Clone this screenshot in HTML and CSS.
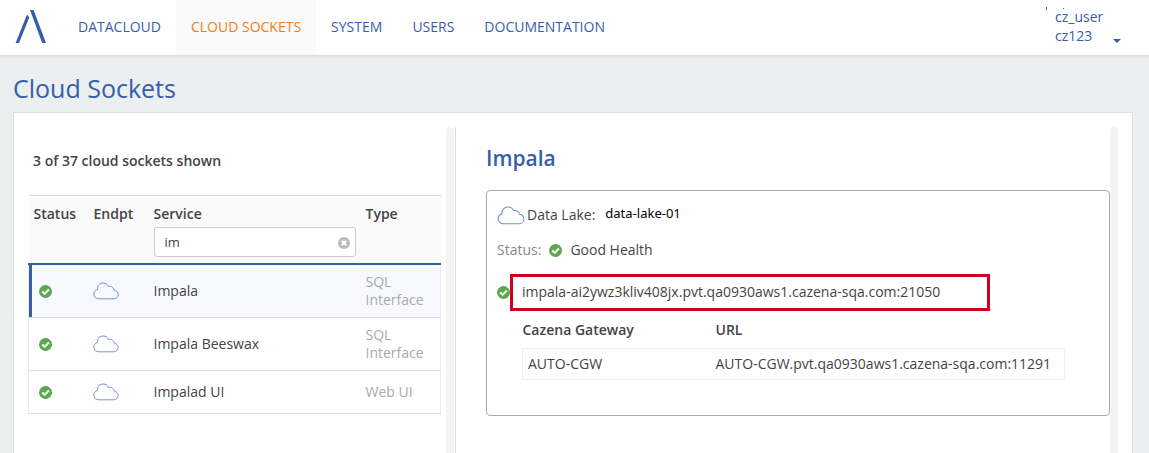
FILE: index.html
```html
<!DOCTYPE html>
<html lang="en">
<head>
<meta charset="utf-8">
<meta name="viewport" content="width=device-width, initial-scale=1">
<title>Cloud Sockets</title>
<link rel="stylesheet" href="styles.css">
</head>
<body>
<svg class="sprite" aria-hidden="true">
  <symbol id="cloud" viewBox="0 0 26 18">
    <path d="M5.8 16.8C2.900 16.800 .8 14.800 .8 12.100C.8 9.800 2.200 8 4.500 7.300C4.200 3.500 6.800 1 10.200 1C12.700 1 14.600 2.400 15.400 4.500C17.800 3.600 20.600 5.100 20.900 7.900C23.500 8.300 25.200 10.200 25.200 12.500C25.200 15 23.300 16.800 20.800 16.800Z" fill="none" stroke="currentColor" stroke-linejoin="round"/>
  </symbol>
  <symbol id="check" viewBox="0 0 12 12">
    <circle cx="6" cy="6" r="6" fill="currentColor"/>
    <path d="M3 6.100L5.200 8.200L9.100 4.200" fill="none" stroke="#fff" stroke-width="1.900"/>
  </symbol>
</svg>

<header class="topbar">
  <a class="logo" href="#" aria-label="Home">
    <svg width="32" height="34" viewBox="0 0 32 34" aria-hidden="true">
      <path d="M12 4.500L14.300 7.500L4 33H.6Z M15 0H18.600L31 33H27.200Z" fill="#375eab"/>
    </svg>
  </a>
  <nav class="nav">
    <a class="nav-link" href="#">DATACLOUD</a>
    <a class="nav-link nav-link-active" href="#" aria-current="page">CLOUD SOCKETS</a>
    <a class="nav-link" href="#">SYSTEM</a>
    <a class="nav-link" href="#">USERS</a>
    <a class="nav-link" href="#">DOCUMENTATION</a>
  </nav>
  <button class="account" type="button">
    <svg class="account-marks" width="20" height="3" viewBox="0 0 20 3" aria-hidden="true">
      <path d="M1 0H2V3H1ZM18 1H19V2H18Z" fill="#375eab"/>
    </svg>
    <span class="account-name">cz_user<br>cz123</span>
    <span class="caret"></span>
  </button>
</header>

<main class="page">
  <h1 class="page-title">Cloud Sockets</h1>
  <div class="panel">
    <section class="list-pane">
      <div class="list-body">
        <p class="count">3 of 37 cloud sockets shown</p>
        <table class="sockets">
          <thead>
            <tr>
              <th class="col-icon" scope="col">Status</th>
              <th class="col-icon" scope="col">Endpt</th>
              <th scope="col">
                <label for="service-filter">Service</label>
                <span class="filter">
                  <input id="service-filter" type="text" value="im">
                  <button class="clear" type="button" aria-label="Clear filter">
                    <svg width="12" height="12" viewBox="0 0 12 12" aria-hidden="true">
                      <circle cx="6" cy="6" r="6" fill="#bbb"/>
                      <path d="M3.700 3.700L8.300 8.300M8.300 3.700L3.700 8.300" stroke="#fff" stroke-width="2"/>
                    </svg>
                  </button>
                </span>
              </th>
              <th class="col-type" scope="col">Type</th>
            </tr>
          </thead>
          <tbody>
            <tr class="selected">
              <td class="status"><svg class="check"><use href="#check"/></svg></td>
              <td class="endpt"><svg class="cloud"><use href="#cloud"/></svg></td>
              <td>Impala</td>
              <td class="type">SQL Interface</td>
            </tr>
            <tr>
              <td class="status"><svg class="check"><use href="#check"/></svg></td>
              <td class="endpt"><svg class="cloud"><use href="#cloud"/></svg></td>
              <td>Impala Beeswax</td>
              <td class="type">SQL Interface</td>
            </tr>
            <tr>
              <td class="status"><svg class="check"><use href="#check"/></svg></td>
              <td class="endpt"><svg class="cloud"><use href="#cloud"/></svg></td>
              <td>Impalad UI</td>
              <td class="type">Web UI</td>
            </tr>
          </tbody>
        </table>
      </div>
      <div class="track"></div>
    </section>

    <section class="detail-pane">
      <div class="detail-body">
        <h2 class="detail-title">Impala</h2>
        <div class="detail-box">
          <div class="lake">
            <svg class="cloud cloud-large"><use href="#cloud"/></svg>
            <span>Data Lake:</span>
            <span class="lake-name">data-lake-01</span>
          </div>
          <div class="health">
            <span class="muted">Status:</span>
            <svg class="check"><use href="#check"/></svg>
            <span>Good Health</span>
          </div>
          <div class="endpoint">
            <svg class="check"><use href="#check"/></svg>
            <span class="address">impala-ai2ywz3kliv408jx.pvt.qa0930aws1.cazena-sqa.com:21050</span>
          </div>
          <table class="gateways">
            <thead>
              <tr><th class="col-gateway" scope="col">Cazena Gateway</th><th scope="col">URL</th></tr>
            </thead>
            <tbody>
              <tr><td>AUTO-CGW</td><td>AUTO-CGW.pvt.qa0930aws1.cazena-sqa.com:11291</td></tr>
            </tbody>
          </table>
        </div>
      </div>
      <div class="track"></div>
    </section>
  </div>
</main>
</body>
</html>
```
FILE: styles.css
```css
* {
  box-sizing: border-box;
}

body {
  margin: 0;
  min-height: 100vh;
  display: flex;
  flex-direction: column;
  background: #ebeff0;
  color: #444;
  font: 14px/18px "Open Sans", "Noto Sans", sans-serif;
}

button,
input {
  font: inherit;
  color: inherit;
}

svg {
  display: block;
  flex: none;
}

.sprite {
  position: absolute;
  width: 0;
  height: 0;
}

/* Top bar */
.topbar {
  display: flex;
  height: 56px;
  background: #fff;
  border-bottom: 1px solid #dcdfdf;
  box-shadow: 0 1px 2px rgba(0, 0, 0, 0.06);
}

.logo {
  width: 63px;
  padding: 10px 0 0 15px;
}

.nav {
  display: flex;
}

.nav-link {
  display: flex;
  align-items: center;
  padding: 0 15px 2px;
  color: #375eab;
  text-decoration: none;
}

.nav-link-active {
  background: #fafafa;
  color: #f57c14;
}

.account {
  position: relative;
  display: flex;
  align-items: flex-start;
  justify-content: space-between;
  width: 66px;
  margin-left: auto;
  margin-right: 28px;
  padding: 7px 0 0;
  border: 0;
  background: none;
  color: #375eab;
  line-height: 19px;
  text-align: left;
}

.account-marks {
  position: absolute;
  top: 7px;
  left: -10px;
}

.caret {
  margin-top: 32px;
  border: 4px solid transparent;
  border-top-color: #375eab;
  border-bottom: 0;
}

/* Page */
.page {
  flex: 1;
  display: flex;
  flex-direction: column;
  padding: 15px 16px 0 13px;
}

.page-title {
  margin: 0 0 7px;
  color: #375eab;
  font-size: 25px;
  font-weight: 400;
  line-height: 34px;
}

.panel {
  flex: 1;
  display: grid;
  grid-template-columns: minmax(0, 442fr) minmax(0, 676fr);
  padding-top: 14px;
  background: #fff;
  border: 1px solid #e2dddd;
  border-bottom: 0;
}

.track {
  flex: none;
  width: 8px;
  background: #f4f4f4;
  border-radius: 4px 4px 0 0;
}

/* Socket list */
.list-pane {
  display: flex;
  gap: 5px;
  padding: 0 1px 0 14px;
  border-right: 1px solid #ddd;
}

.list-body {
  flex: 1;
  min-width: 0;
}

.count {
  margin: 25px 0;
  padding-left: 5px;
  font-weight: 600;
}

.sockets {
  width: 100%;
  table-layout: fixed;
  border-collapse: collapse;
}

.sockets th {
  height: 68px;
  padding: 9px 5px 6px;
  background: #fafafa;
  border-top: 1px solid #ddd;
  font-weight: 600;
  text-align: left;
  vertical-align: top;
}

.col-icon {
  width: 60px;
}

.col-type {
  width: 80px;
}

.filter {
  position: relative;
  display: block;
  margin-top: 4px;
  font-weight: 400;
}

.filter input {
  display: block;
  width: 100%;
  height: 30px;
  padding: 0 28px 0 10px;
  border: 1px solid #ccc;
  border-radius: 3px;
  background: #fff;
  font-size: 13px;
}

.clear {
  position: absolute;
  top: 10px;
  right: 6px;
  padding: 0;
  border: 0;
  background: none;
}

.sockets tbody {
  border-left: 1px solid #eee;
  border-right: 1px solid #eee;
}

.sockets td {
  padding: 8px 5px;
  border-bottom: 1px solid #ddd;
}

.sockets tr:last-child td {
  padding-top: 12px;
  padding-bottom: 12px;
}

.sockets .selected td {
  background: #f8f9fe;
  border-top: 2px solid #375eab;
}

.sockets .selected .status {
  box-shadow: inset 3px 0 #375eab;
}

.sockets .status {
  padding-left: 10px;
}

.sockets .endpt {
  padding-left: 4px;
}

.sockets .type {
  color: #aaa;
}

.check {
  width: 13px;
  height: 13px;
  color: #5ba84f;
}

.cloud {
  width: 26px;
  height: 18px;
  color: #7892cd;
}

.cloud-large {
  width: 28px;
  height: 19px;
}

/* Socket detail */
.detail-pane {
  display: flex;
  padding: 0 14px 0 30px;
}

.detail-body {
  flex: 1;
  min-width: 0;
}

.detail-title {
  margin: 16px 0 17px;
  color: #375eab;
  font-size: 21px;
  font-weight: 600;
  line-height: 30px;
}

.detail-box {
  min-height: 226px;
  padding: 13px 10px;
  border: 1px solid #aaa;
  border-radius: 4px;
}

.lake {
  display: flex;
  align-items: center;
  gap: 2px;
}

.lake-name {
  margin-left: 8px;
  padding-bottom: 4px;
  color: #000;
  font-family: "Noto Sans", "Open Sans", sans-serif;
  font-size: 13px;
}

.health {
  display: flex;
  align-items: center;
  gap: 8px;
  margin-top: 15px;
}

.muted {
  color: #888;
}

.endpoint {
  display: flex;
  align-items: center;
  margin-top: 15px;
}

.address {
  padding: 6px 47px 7px 9px;
  border: 3px solid #d0021b;
}

.gateways {
  width: calc(100% - 59px);
  margin: 10px 0 0 25px;
  table-layout: fixed;
  border-collapse: collapse;
}

.gateways th {
  padding: 0 0 9px;
  font-weight: 600;
  text-align: left;
}

.gateways th + th {
  padding-left: 5px;
}

.col-gateway {
  width: 188px;
}

.gateways tbody {
  border: 1px solid #eee;
}

.gateways td {
  padding: 6px 5px;
}
```
